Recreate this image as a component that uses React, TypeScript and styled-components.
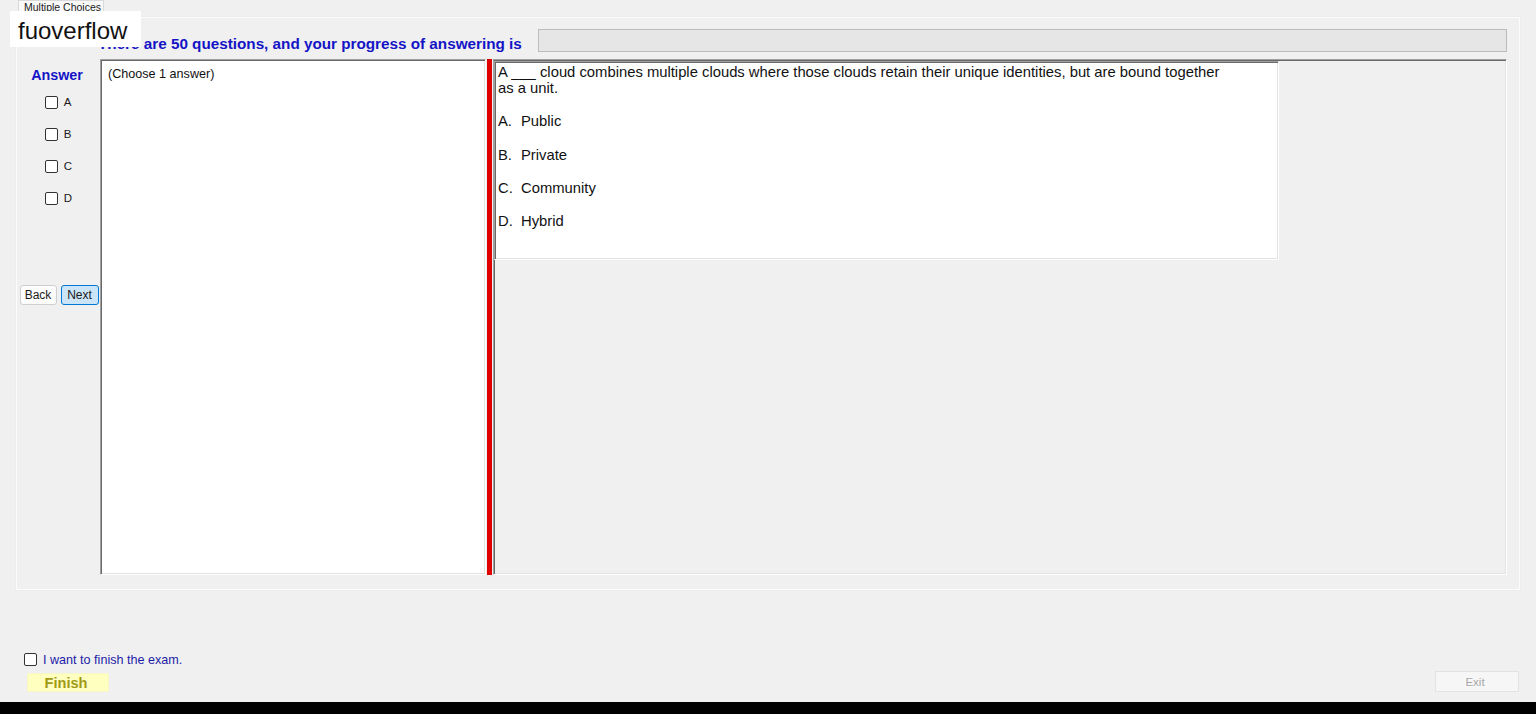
import React from "react";
import styled, { createGlobalStyle, css } from "styled-components";

const GlobalStyle = createGlobalStyle`
  html, body {
    margin: 0;
    padding: 0;
    background: #f0f0f0;
    font-family: "Liberation Sans", Arial, sans-serif;
  }
  #root {
    width: 1536px;
    height: 714px;
    overflow: hidden;
  }
`;

const sunken = css`
  box-sizing: border-box;
  border-style: solid;
  border-width: 1px;
  border-color: #a0a0a0 #ffffff #ffffff #a0a0a0;
  box-shadow: inset 1px 1px 0 #696969, inset -1px -1px 0 #e3e3e3;
`;

const Window = styled.div`
  position: relative;
  width: 1536px;
  height: 714px;
  display: flex;
  flex-direction: column;
  background: #f0f0f0;
  overflow: hidden;
`;

const TabStrip = styled.div`
  height: 17px;
  display: flex;
  padding-left: 18px;
`;

const Tab = styled.div`
  box-sizing: border-box;
  width: 86px;
  height: 17px;
  border: 1px solid #dadada;
  border-bottom: none;
  background: #f9f9f9;
  font-size: 10.5px;
  line-height: 12px;
  color: #1a1a1a;
  padding-left: 5px;
  white-space: nowrap;
`;

const Panel = styled.div`
  box-sizing: border-box;
  margin-left: 16px;
  width: 1504px;
  height: 573px;
  border: 1px solid #fcfcfc;
  box-shadow: 0 0 0 1px #ececec;
  display: flex;
  flex-direction: column;
  padding: 11px 12px 14px 0;
`;

const HeaderRow = styled.div`
  display: flex;
  align-items: flex-end;
  height: 23px;
`;

const Heading = styled.div`
  margin-left: 81px;
  width: 440px;
  font-size: 15.25px;
  font-weight: bold;
  line-height: 16px;
  color: #1414c6;
  white-space: nowrap;
`;

const ProgressBar = styled.div`
  box-sizing: border-box;
  flex: 1;
  height: 23px;
  background: #e6e6e6;
  border: 1px solid #bcbcbc;
`;

const ContentRow = styled.div`
  display: flex;
  height: 516px;
  margin-top: 7px;
`;

const Sidebar = styled.div`
  width: 83px;
  display: flex;
  flex-direction: column;
  align-items: center;
`;

const AnswerLabel = styled.div`
  margin-top: 8px;
  margin-right: 3px;
  font-size: 14.3px;
  font-weight: bold;
  line-height: 16px;
  color: #1414c6;
`;

const ChoiceList = styled.div`
  margin-top: 3px;
  display: flex;
  flex-direction: column;
`;

const ChoiceRow = styled.div`
  height: 32px;
  display: flex;
  align-items: center;
  gap: 6px;
  font-size: 11.5px;
  color: #1a1a1a;
`;

const CheckBox = styled.span`
  box-sizing: border-box;
  display: inline-block;
  width: 13px;
  height: 13px;
  border: 1px solid #333333;
  border-radius: 2px;
  background: #ffffff;
`;

const ButtonRow = styled.div`
  margin: 71px 0 0 1px;
  display: flex;
  gap: 4px;
`;

const NavButton = styled.button<{ $primary?: boolean }>`
  box-sizing: border-box;
  width: ${(p) => (p.$primary ? "38px" : "37px")};
  height: 20px;
  padding: 0;
  border-radius: 3px;
  border: 1px solid ${(p) => (p.$primary ? "#0078d7" : "#cfcfcf")};
  background: ${(p) => (p.$primary ? "#cce4f7" : "#fdfdfd")};
  font-family: "Liberation Sans", Arial, sans-serif;
  font-size: 12px;
  color: #1a1a1a;
`;

const AnswerBox = styled.div`
  ${sunken};
  width: 386px;
  height: 516px;
  background: #ffffff;
  padding: 7px 6px 0 7px;
  font-size: 12.6px;
  line-height: 15px;
  color: #111111;
`;

const Splitter = styled.div`
  width: 5px;
  margin: 0 1px;
  background: #e00000;
`;

const QuestionPanel = styled.div`
  ${sunken};
  width: 1014px;
  height: 516px;
  background: #f0f0f0;
  padding-top: 1px;
`;

const QuestionBox = styled.div`
  ${sunken};
  width: 785px;
  height: 199px;
  background: #ffffff;
  padding: 2px 1px 0 3px;
  font-size: 14.8px;
  line-height: 16px;
  color: #111111;
`;

const Option = styled.div<{ $gap: number }>`
  margin-top: ${(p) => p.$gap}px;
  display: flex;
`;

const OptionLetter = styled.span`
  display: inline-block;
  width: 23px;
`;

const Footer = styled.div`
  flex: 1;
  display: flex;
  justify-content: space-between;
  align-items: flex-end;
  padding: 0 17px 10px 24px;
`;

const FinishColumn = styled.div`
  display: flex;
  flex-direction: column;
`;

const FinishRow = styled.div`
  height: 16px;
  display: flex;
  align-items: center;
  gap: 6px;
`;

const FinishLabel = styled.span`
  font-size: 12.6px;
  line-height: 16px;
  padding-top: 2px;
  color: #1c1ca8;
`;

const FinishButton = styled.button`
  box-sizing: border-box;
  margin: 6px 0 0 3px;
  width: 82px;
  height: 19px;
  padding: 0 4px 0 0;
  border: 1px solid #f6f6c8;
  background: #ffffc0;
  font-family: "Liberation Sans", Arial, sans-serif;
  font-size: 14.6px;
  font-weight: bold;
  color: #a09a14;
`;

const ExitButton = styled.button`
  box-sizing: border-box;
  width: 84px;
  height: 21px;
  padding: 0 4px 0 0;
  border: 1px solid #e2e2e2;
  background: #f6f6f6;
  font-family: "Liberation Sans", Arial, sans-serif;
  font-size: 11.5px;
  color: #a8a8a8;
`;

const BlackBar = styled.div`
  height: 12px;
  background: #000000;
`;

const Watermark = styled.div`
  position: absolute;
  left: 10px;
  top: 11px;
  box-sizing: border-box;
  width: 131px;
  height: 36px;
  padding: 5px 0 0 8px;
  background: #ffffff;
  font-size: 24px;
  line-height: 30px;
  color: #111111;
`;

const choices = ["A", "B", "C", "D"];
const options: [string, string, number][] = [
  ["A.", "Public", 17],
  ["B.", "Private", 18],
  ["C.", "Community", 17],
  ["D.", "Hybrid", 17],
];

export default function App() {
  return (
    <Window>
      <GlobalStyle />
      <TabStrip>
        <Tab>Multiple Choices</Tab>
      </TabStrip>
      <Panel>
        <HeaderRow>
          <Heading>There are 50 questions, and your progress of answering is</Heading>
          <ProgressBar />
        </HeaderRow>
        <ContentRow>
          <Sidebar>
            <AnswerLabel>Answer</AnswerLabel>
            <ChoiceList>
              {choices.map((c) => (
                <ChoiceRow key={c}>
                  <CheckBox />
                  <span>{c}</span>
                </ChoiceRow>
              ))}
            </ChoiceList>
            <ButtonRow>
              <NavButton>Back</NavButton>
              <NavButton $primary>Next</NavButton>
            </ButtonRow>
          </Sidebar>
          <AnswerBox>(Choose 1 answer)</AnswerBox>
          <Splitter />
          <QuestionPanel>
            <QuestionBox>
              <div>
                A ___ cloud combines multiple clouds where those clouds retain their unique identities, but are bound together
                <br />
                as a unit.
              </div>
              {options.map(([l, t, g]) => (
                <Option key={l} $gap={g}>
                  <OptionLetter>{l}</OptionLetter>
                  <span>{t}</span>
                </Option>
              ))}
            </QuestionBox>
          </QuestionPanel>
        </ContentRow>
      </Panel>
      <Footer>
        <FinishColumn>
          <FinishRow>
            <CheckBox />
            <FinishLabel>I want to finish the exam.</FinishLabel>
          </FinishRow>
          <FinishButton>Finish</FinishButton>
        </FinishColumn>
        <ExitButton>Exit</ExitButton>
      </Footer>
      <BlackBar />
      <Watermark>fuoverflow</Watermark>
    </Window>
  );
}
